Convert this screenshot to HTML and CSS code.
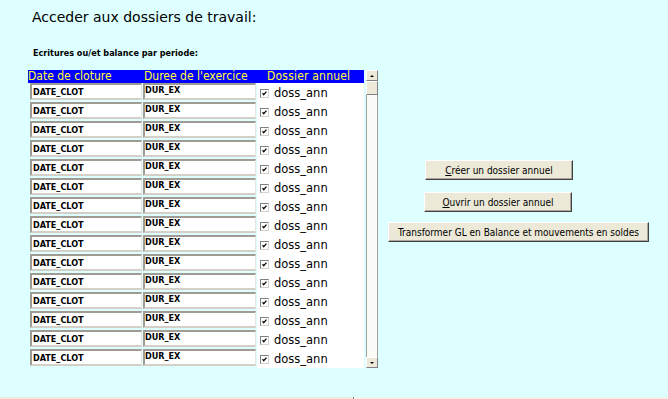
FILE: index.html
```html
<!DOCTYPE html>
<html>
<head>
    <link rel="stylesheet" href="styles.css">
</head>
<body>
    <div class="page">
        <h1 class="title">Acceder aux dossiers de travail:</h1>
        <div class="subtitle">Ecritures ou/et balance par periode:</div>

        <div class="main">
            <div class="list">
                <div class="grid">
                    <div class="head">Date de cloture</div>
                    <div class="head head-duree">Duree de l'exercice</div>
                    <div class="head head-dossier">Dossier annuel</div>

                    <div class="cell"><div class="field date">DATE_CLOT</div></div>
                    <div class="cell"><div class="field duree">DUR_EX</div></div>
                    <div class="check"><svg class="box" viewBox="0 0 9 9"><polyline points="2,4 3.5,6 7,2"/></svg>doss_ann</div>

                    <div class="cell"><div class="field date">DATE_CLOT</div></div>
                    <div class="cell"><div class="field duree">DUR_EX</div></div>
                    <div class="check"><svg class="box" viewBox="0 0 9 9"><polyline points="2,4 3.5,6 7,2"/></svg>doss_ann</div>

                    <div class="cell"><div class="field date">DATE_CLOT</div></div>
                    <div class="cell"><div class="field duree">DUR_EX</div></div>
                    <div class="check"><svg class="box" viewBox="0 0 9 9"><polyline points="2,4 3.5,6 7,2"/></svg>doss_ann</div>

                    <div class="cell"><div class="field date">DATE_CLOT</div></div>
                    <div class="cell"><div class="field duree">DUR_EX</div></div>
                    <div class="check"><svg class="box" viewBox="0 0 9 9"><polyline points="2,4 3.5,6 7,2"/></svg>doss_ann</div>

                    <div class="cell"><div class="field date">DATE_CLOT</div></div>
                    <div class="cell"><div class="field duree">DUR_EX</div></div>
                    <div class="check"><svg class="box" viewBox="0 0 9 9"><polyline points="2,4 3.5,6 7,2"/></svg>doss_ann</div>

                    <div class="cell"><div class="field date">DATE_CLOT</div></div>
                    <div class="cell"><div class="field duree">DUR_EX</div></div>
                    <div class="check"><svg class="box" viewBox="0 0 9 9"><polyline points="2,4 3.5,6 7,2"/></svg>doss_ann</div>

                    <div class="cell"><div class="field date">DATE_CLOT</div></div>
                    <div class="cell"><div class="field duree">DUR_EX</div></div>
                    <div class="check"><svg class="box" viewBox="0 0 9 9"><polyline points="2,4 3.5,6 7,2"/></svg>doss_ann</div>

                    <div class="cell"><div class="field date">DATE_CLOT</div></div>
                    <div class="cell"><div class="field duree">DUR_EX</div></div>
                    <div class="check"><svg class="box" viewBox="0 0 9 9"><polyline points="2,4 3.5,6 7,2"/></svg>doss_ann</div>

                    <div class="cell"><div class="field date">DATE_CLOT</div></div>
                    <div class="cell"><div class="field duree">DUR_EX</div></div>
                    <div class="check"><svg class="box" viewBox="0 0 9 9"><polyline points="2,4 3.5,6 7,2"/></svg>doss_ann</div>

                    <div class="cell"><div class="field date">DATE_CLOT</div></div>
                    <div class="cell"><div class="field duree">DUR_EX</div></div>
                    <div class="check"><svg class="box" viewBox="0 0 9 9"><polyline points="2,4 3.5,6 7,2"/></svg>doss_ann</div>

                    <div class="cell"><div class="field date">DATE_CLOT</div></div>
                    <div class="cell"><div class="field duree">DUR_EX</div></div>
                    <div class="check"><svg class="box" viewBox="0 0 9 9"><polyline points="2,4 3.5,6 7,2"/></svg>doss_ann</div>

                    <div class="cell"><div class="field date">DATE_CLOT</div></div>
                    <div class="cell"><div class="field duree">DUR_EX</div></div>
                    <div class="check"><svg class="box" viewBox="0 0 9 9"><polyline points="2,4 3.5,6 7,2"/></svg>doss_ann</div>

                    <div class="cell"><div class="field date">DATE_CLOT</div></div>
                    <div class="cell"><div class="field duree">DUR_EX</div></div>
                    <div class="check"><svg class="box" viewBox="0 0 9 9"><polyline points="2,4 3.5,6 7,2"/></svg>doss_ann</div>

                    <div class="cell"><div class="field date">DATE_CLOT</div></div>
                    <div class="cell"><div class="field duree">DUR_EX</div></div>
                    <div class="check"><svg class="box" viewBox="0 0 9 9"><polyline points="2,4 3.5,6 7,2"/></svg>doss_ann</div>

                    <div class="cell"><div class="field date">DATE_CLOT</div></div>
                    <div class="cell"><div class="field duree">DUR_EX</div></div>
                    <div class="check"><svg class="box" viewBox="0 0 9 9"><polyline points="2,4 3.5,6 7,2"/></svg>doss_ann</div>
                </div>

                <div class="scrollbar">
                    <div class="sb-btn"><span class="arrow-up"></span></div>
                    <div class="sb-thumb"></div>
                    <div class="sb-track"></div>
                    <div class="sb-btn"><span class="arrow-down"></span></div>
                </div>
            </div>

            <div class="actions">
                <button class="btn btn-creer"><u>C</u>réer un dossier annuel</button>
                <button class="btn btn-ouvrir"><u>O</u>uvrir un dossier annuel</button>
                <button class="btn btn-transformer">Transformer GL en Balance et mouvements en soldes</button>
            </div>
        </div>

        <div class="status">
            <div class="status-left"></div>
            <div class="status-right"></div>
        </div>
    </div>
</body>
</html>
```

FILE: styles.css
```css
body {
    margin: 0;
    background-color: #ddffff;
    font-family: "DejaVu Sans Condensed", "DejaVu Sans", sans-serif;
    color: #000000;
}
.page {
    height: 399px;
    display: flex;
    flex-direction: column;
    overflow: hidden;
}
.title {
    margin: 9px 0 0 32px;
    font-family: "DejaVu Sans", sans-serif;
    font-size: 14px;
    font-weight: normal;
    line-height: 17px;
}
.subtitle {
    margin: 21px 0 0 33px;
    font-size: 9px;
    font-weight: bold;
    line-height: 12px;
}
.main {
    display: flex;
    margin: 11px 0 0 28px;
}
.list {
    display: flex;
}
.grid {
    display: grid;
    grid-template-columns: 115px 114px 107px;
    grid-auto-rows: 19px;
    grid-template-rows: 13px;
}
.head {
    background-color: #0000ff;
    color: #ffff33;
    font-size: 12px;
    line-height: 13px;
    white-space: nowrap;
}
.head-duree {
    padding-left: 1px;
}
.head-dossier {
    padding-left: 10px;
    letter-spacing: 0.2px;
}
.field {
    box-sizing: border-box;
    height: 17px;
    background-color: #ffffff;
    border-top: 2px solid #a09c94;
    border-left: 2px solid #a09c94;
    border-bottom: 2px solid #d4d0c8;
    border-right: 1px solid #e8e6e0;
    font-size: 9px;
    font-weight: bold;
    white-space: nowrap;
}
.date {
    margin-left: 2px;
    width: 112px;
    padding: 1px 0 0 1px;
    line-height: 12px;
}
.duree {
    width: 113px;
    padding: 0;
    line-height: 10px;
}
.check {
    background-color: #ffffff;
    display: flex;
    align-items: center;
    font-family: "DejaVu Sans", sans-serif;
    font-size: 11.5px;
    padding: 1px 0 0 3px;
}
.box {
    box-sizing: border-box;
    width: 9px;
    height: 9px;
    border: 1px solid #7f7f7f;
    border-right-color: #d4d0c8;
    border-bottom-color: #d4d0c8;
    background-color: #ffffff;
    margin: 1px 5px 0 0;
    fill: none;
    stroke: #000000;
    stroke-width: 1.6;
}
.scrollbar {
    width: 12px;
    margin-left: 2px;
    display: flex;
    flex-direction: column;
    background-color: #ffffff;
}
.sb-btn, .sb-thumb {
    box-sizing: border-box;
    height: 11px;
    background-color: #ece9d8;
    border: 1px solid #ffffff;
    border-right-color: #808080;
    border-bottom-color: #808080;
    display: flex;
    align-items: center;
    justify-content: center;
}
.sb-thumb {
    height: 14px;
}
.sb-track {
    flex: 1;
    border-left: 1px solid #a0a0a0;
    border-right: 1px solid #a0a0a0;
    background-color: #fbfbf8;
}
.arrow-up {
    width: 0;
    height: 0;
    border-left: 2px solid transparent;
    border-right: 2px solid transparent;
    border-bottom: 2px solid #000000;
}
.arrow-down {
    width: 0;
    height: 0;
    border-left: 2px solid transparent;
    border-right: 2px solid transparent;
    border-top: 2px solid #000000;
}
.actions {
    display: flex;
    flex-direction: column;
    align-items: flex-start;
    padding-top: 90px;
}
.btn {
    box-sizing: border-box;
    height: 20px;
    padding: 0;
    background-color: #ece9d8;
    border: 1px solid #ffffff;
    border-right-color: #404040;
    border-bottom-color: #404040;
    box-shadow: inset -1px -1px 0 #aca899;
    font-family: "DejaVu Sans Condensed", "DejaVu Sans", sans-serif;
    font-size: 10px;
    color: #000000;
    white-space: nowrap;
}
.btn-creer {
    width: 148px;
    margin-left: 47px;
}
.btn-ouvrir {
    width: 148px;
    margin-left: 46px;
    margin-top: 12px;
}
.btn-transformer {
    width: 261px;
    margin-left: 10px;
    margin-top: 10px;
}
.status {
    margin-top: auto;
    height: 2px;
    display: flex;
}
.status-left {
    width: 353px;
    background-color: #ece9d8;
    border-right: 1px solid #808080;
}
.status-right {
    flex: 1;
    background-color: #f4f2e8;
}
```
